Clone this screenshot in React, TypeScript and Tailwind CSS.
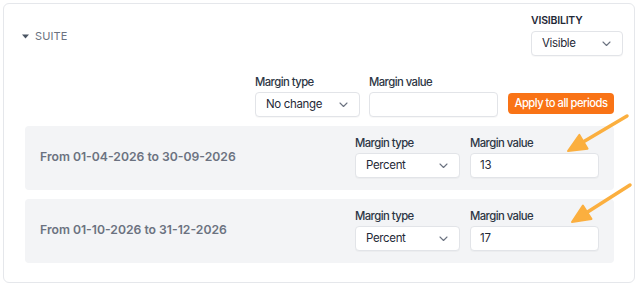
import * as React from 'react';

const font = { fontFamily: 'Inter, "Noto Sans", sans-serif' };

const Chevron = () => (
  <svg width="9" height="6" viewBox="0 0 9 6" fill="none" className="shrink-0">
    <polyline points="1,1 4.5,4.5 8,1" stroke="#6b7280" strokeWidth="1.1" strokeLinecap="round" strokeLinejoin="round" />
  </svg>
);

const Select = ({ value, width }: { value: string; width: string }) => (
  <div className={`${width} h-[25px] flex items-center justify-between pl-[10px] pr-[11px] bg-white border border-[#e2e4e8] rounded-[4px] shadow-[0_1px_1px_rgba(0,0,0,0.03)]`}>
    <span className="text-[11.5px] tracking-[-0.35px] text-[#1f2937]">{value}</span>
    <Chevron />
  </div>
);

const Input = ({ value }: { value?: string }) => (
  <div className="w-[129px] h-[25px] flex items-center px-[9px] bg-white border border-[#e2e4e8] rounded-[4px] shadow-[0_1px_1px_rgba(0,0,0,0.03)]">
    <span className="text-[11.5px] tracking-[-0.2px] text-[#1f2937]">{value}</span>
  </div>
);

const Field = ({ label, children }: { label: string; children: React.ReactNode }) => (
  <div className="flex flex-col gap-[3px]">
    <span className="text-[11.3px] leading-[14px] font-medium text-[#2d3644] tracking-[-0.55px]">{label}</span>
    {children}
  </div>
);

const periods = [
  { label: 'From 01-04-2026 to 30-09-2026', value: '13' },
  { label: 'From 01-10-2026 to 31-12-2026', value: '17' },
];

const Arrows = () => (
  <svg className="absolute inset-0 pointer-events-none" width="640" height="290" viewBox="0 0 640 290">
    <g stroke="#fbaf3f" fill="#fbaf3f" strokeLinecap="round" strokeLinejoin="round">
      <line x1="627" y1="113" x2="583.5" y2="138.8" strokeWidth="3.5" />
      <polygon points="568,148 587.6,145.7 579.4,131.9" strokeWidth="2" />
      <line x1="630" y1="182" x2="587.2" y2="209.3" strokeWidth="3.5" />
      <polygon points="572,219 591.5,216 582.9,202.6" strokeWidth="2" />
    </g>
  </svg>
);

export default function App() {
  return (
    <div className="relative w-[640px] h-[290px] bg-white" style={font}>
      <div className="ml-[3px] mt-[3px] w-[632px] h-[280px] border border-[#e5e7eb] rounded-[6px]">
        <div className="flex justify-between items-start pt-[10px] pl-[18px] pr-[11px]">
          <div className="flex items-center gap-[6px] mt-[14px] h-[16px]">
            <svg width="7" height="5" viewBox="0 0 7 5">
              <polygon points="0,0.5 7,0.5 3.5,4.5" fill="#4b5563" />
            </svg>
            <span className="text-[11px] text-[#6b7280] tracking-[0.1px]">SUITE</span>
          </div>
          <div className="flex flex-col gap-[3px]">
            <span className="text-[10.5px] leading-[14px] font-semibold text-[#1f2937] tracking-[-0.2px]">VISIBILITY</span>
            <Select value="Visible" width="w-[92px]" />
          </div>
        </div>

        <div className="flex justify-end items-end mt-[19px] pr-[20px]">
          <Field label="Margin type">
            <Select value="No change" width="w-[105px]" />
          </Field>
          <div className="ml-[9px]">
            <Field label="Margin value">
              <Input />
            </Field>
          </div>
          <button className="ml-[10px] mb-[3px] w-[106px] h-[21px] rounded-[4px] bg-[#f97316] text-white text-[11.2px] font-medium whitespace-nowrap tracking-[-0.5px] flex items-center justify-center">
            Apply to all periods
          </button>
        </div>

        <div className="flex flex-col gap-[9px] mt-[9px] pl-[21px] pr-[20px]">
          {periods.map((p) => (
            <div key={p.label} className="flex items-center justify-between h-[64px] pl-[15px] pr-[15px] pb-[2px] bg-[#f3f4f6] rounded-[4px]">
              <span className="text-[12.2px] font-semibold text-[#6b7280]">{p.label}</span>
              <div className="flex gap-[10px]">
                <Field label="Margin type">
                  <Select value="Percent" width="w-[105px]" />
                </Field>
                <Field label="Margin value">
                  <Input value={p.value} />
                </Field>
              </div>
            </div>
          ))}
        </div>
      </div>
      <Arrows />
    </div>
  );
}
